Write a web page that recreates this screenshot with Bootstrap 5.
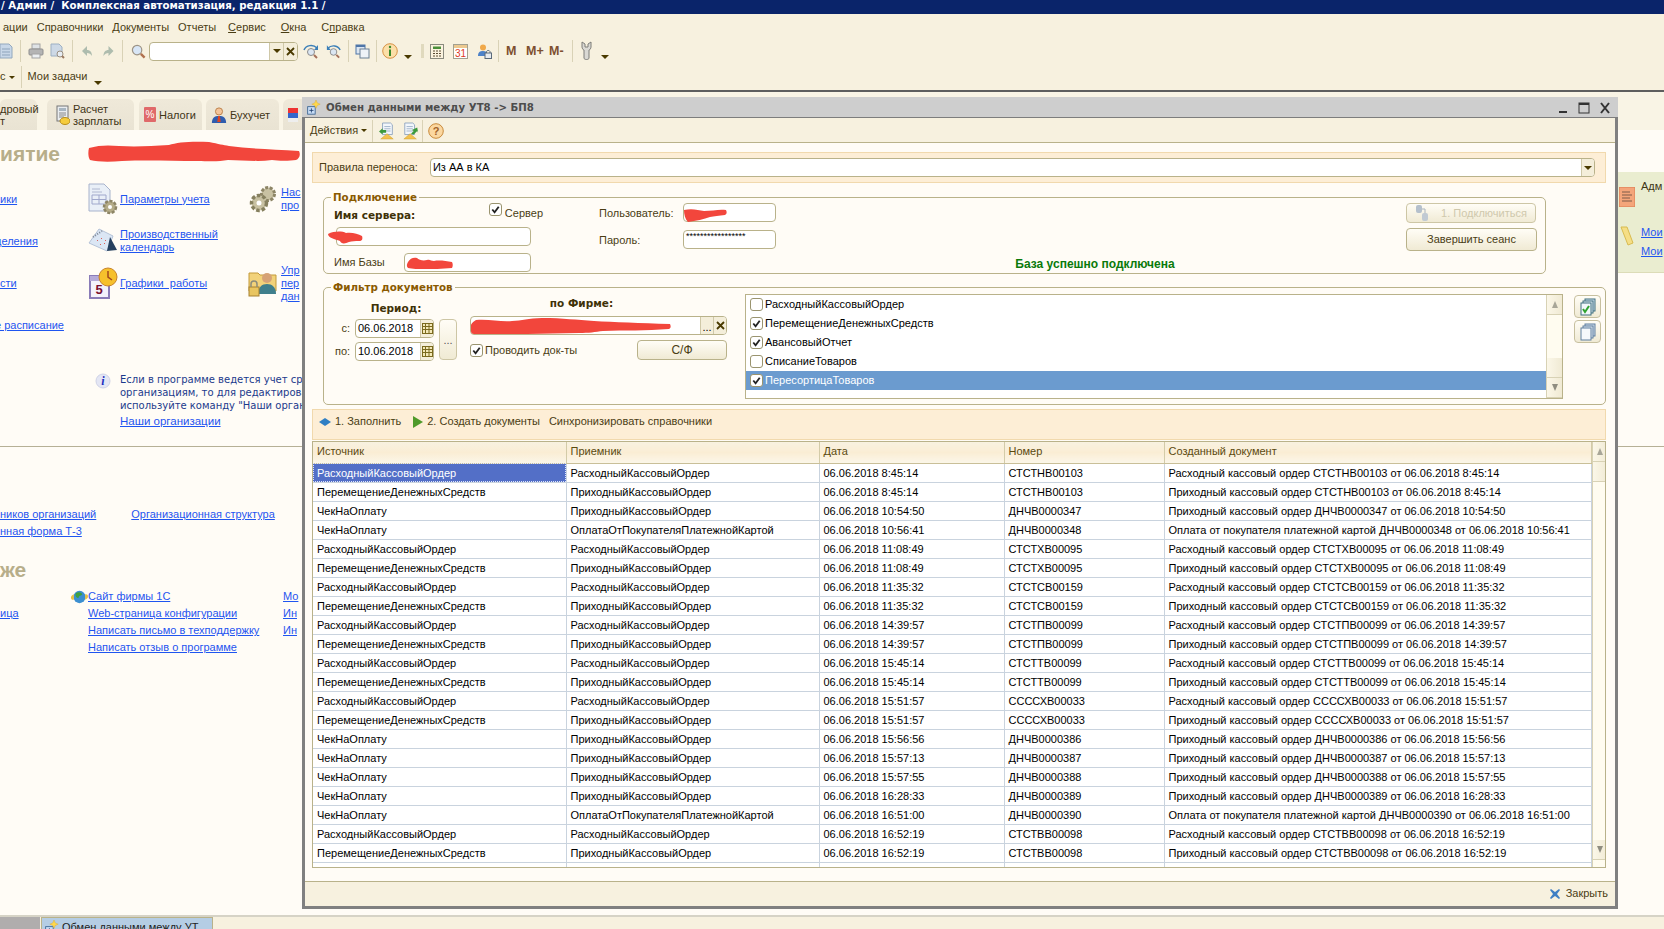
<!DOCTYPE html>
<html lang="ru">
<head>
  <meta charset="UTF-8" />
  <meta name="viewport" content="width=device-width, initial-scale=1.0"/>
  <title>Обмен данными между УТ8 -> БП8</title>
  <link href="https://cdn.jsdelivr.net/npm/bootstrap@5.3.2/dist/css/bootstrap.min.css" rel="stylesheet" />
  <style>
    body { margin: 0; background: #fffcf6; font: 11px/1.2 "Liberation Sans", Arial, sans-serif; color: #000; overflow: hidden; }
    a { color: #1f55f0; }
    svg { display: block; flex: none; }

    .desk { width: 1664px; height: 929px; position: relative; overflow: hidden; }
    .app-title { height: 14px; background: #0a246a; color: #fff; font: bold 10.2px/12px "DejaVu Sans", sans-serif; white-space: pre; padding-left: 1px; overflow: hidden; }
    .app-head { height: 78px; background: #f7f1df; border-bottom: 2px solid #5e5e5e; color: #4a3d14; }
    .menu-row { height: 24px; padding: 7px 0 0 3px; gap: 9px; }
    .tool-row { height: 26px; }
    .tool-row2 { height: 25px; padding-top: 1px; }
    .sep { width: 1px; height: 22px; background: #d9d2b6; flex: none; }
    .m3 { margin-left: 3px; } .m4 { margin-left: 4px; } .m5 { margin-left: 5px; } .m6 { margin-left: 6px; }
    .m7 { margin-left: 7px; } .m8 { margin-left: 8px; } .m9 { margin-left: 9px; } .m12 { margin-left: 12px; }
    .first-ic { margin-left: -2px; }
    .mk { font: bold 12.5px/1 "Liberation Sans", sans-serif; color: #7d4f2f; }
    .mk-1 { width: 11px; } .mk-2 { width: 19px; } .mk-3 { width: 16px; }
    .tri { width: 0; height: 0; border-left: 4px solid transparent; border-right: 4px solid transparent; border-top: 4px solid #4a3a00; flex: none; }
    .tri-sm { border-left-width: 3px; border-right-width: 3px; border-top-width: 3px; }
    .tri-low { margin-top: 11px; }
    .search-box { width: 149px; height: 19px; border: 1px solid #b9b28a; border-radius: 4px; background: #fff; overflow: hidden; }
    .search-btn { width: 14px; background: #f4eeda; border-left: 1px solid #cfc8a8; }

    .tab-strip { height: 38px; padding-top: 7px; background: #f9f4e5; }
    .tab-item { height: 31px; border-radius: 6px 6px 0 0; background: linear-gradient(#efe9d9, #e9e3d3); color: #3f3517; line-height: 12px; gap: 3px; padding: 0 5px; flex: none; }
    .t1 { width: 37px; padding: 0; margin-right: 10px; } .t2 { width: 87px; margin-right: 5px; padding-left: 9px; } .t3 { width: 63px; margin-right: 4px; }
    .t4 { width: 73px; margin-right: 4px; } .t5 { width: 30px; }

    .sp-upper { height: 317px; border-bottom: 1px solid #b6b096; }
    .sp-left { width: 1618px; }
    .sp-head { height: 48px; font: bold 21px/48px "Liberation Sans", sans-serif; color: #b7ae8a; }
    .sp-grid { display: grid; grid-template-columns: 88px 32px 128px 33px 100px; grid-auto-rows: 42px; align-items: center; }
    .sp-grid a, .sp-links a, .sp-info a, .sp-grid2 a { font-size: 11px; line-height: 13px; white-space: nowrap; }
    .clip-l { margin-left: -5px; }
    .sp-info { margin: 27px 0 0 95px; gap: 9px; color: #1b3a8c; line-height: 13px; font-family: "DejaVu Sans", sans-serif; font-size: 10px; white-space: nowrap; }
    .sp-info a { display: block; margin-top: 3px; font-family: "Liberation Sans", sans-serif; font-size: 11.5px; }
    .sp-links { padding-top: 61px; height: 92px; }
    .sp-links a { display: block; margin-bottom: 4px; }
    .sp-links .c2 { margin-left: 35px; }
    .sp-head2 { height: 32px; font: bold 21px/32px "Liberation Sans", sans-serif; color: #b7ae8a; margin-top: 15px; }
    .sp-grid2 { display: grid; grid-template-columns: 71px 17px 195px 40px; grid-auto-rows: 17px; align-items: center; margin-top: 2px; }
    .side-panel { margin-top: 42px; height: 101px; background: #eaedd0; border-bottom: 1px solid #dcdcb8; padding: 8px 0 0 1px; }
    .side-panel a { display: block; margin-top: 6px; line-height: 13px; }
    .side-name { gap: 6px; color: #3f3517; }
    .side-name svg { margin-top: 7px; }
    .side-links { gap: 6px; margin-top: 19px; }

    .task-bar { position: absolute; left: 0; right: 0; top: 915px; height: 14px; border-top: 2px solid #d6d3c6; background: #f7f1df; overflow: hidden; }
    .task-gray { width: 40px; background: #b0adad; }
    .task-tab { width: 172px; margin-left: 1px; background: #b5cde4; border: 1px solid #b9b28a; border-bottom: 0; padding: 2px 0 0 2px; gap: 3px; line-height: 14px; overflow: hidden; white-space: nowrap; color: #222; }

    /* окно обработки поверх начальной страницы */
    .win { position: absolute; left: 302px; top: 97px; width: 1316px; height: 812px; background: #fffcf6; border: solid #808080; border-width: 0 3px 3px 3px; }
    .win-title { height: 21px; flex: none; background: #cecece; border-bottom: 1px solid #7d7d7d; margin: 0 -3px; padding: 1px 7px 0 4px; gap: 5px; font: bold 10.2px/20px "DejaVu Sans", sans-serif; color: #4c4c4c; }
    .win-bar { height: 25px; flex: none; background: #f7f1df; border-bottom: 1px solid #b9b28a; color: #4a3d14; padding: 1px 0 0 5px; }
    .win-body { padding: 9px 9px 0 7px; min-height: 0; }
    .band { height: 31px; flex: none; background: #fdeed6; border: 1px solid #f1d9ad; color: #4a3d14; }
    .band-rule { padding-left: 6px; }
    .fld { height: 19px; border: 1px solid #b9b28a; border-radius: 4px; background: #fff; color: #000; overflow: hidden; padding: 0 2px; flex: none; }
    .rule-fld { margin: 0 10px 0 12px; padding-right: 0; flex: 1 1 auto; }
    .fld-btn { border-left: 1px solid #cfc8a8; background: #f4eeda; width: 13px; height: 100%; }

    .grp { position: relative; flex: none; border: 1px solid #b9b28a; border-radius: 5px; }
    .grp-title { position: absolute; left: 7px; top: -7px; padding: 0 2px; background: #fffcf6; color: #8a5a00; font: bold 10.3px/13px "DejaVu Sans", sans-serif; }
    .grp-conn { margin: 14px 60px 0 11px; height: 77px; padding: 5px 8px 0 10px; color: #4a3d14; }
    .gc1 { width: 197px; } .gc2 { width: 177px; margin-left: 68px; } .gc3 { width: 630px; } .gc4 { width: 131px; }
    .caps { font: bold 10.5px/13px "DejaVu Sans", sans-serif; color: #3f3208; }
    .srv-row { width: 209px; height: 24px; }
    .srv-cap { width: 156px; margin-top: 6px; }
    .srv-row .cb { margin-top: 6px; }
    .srv-txt { margin: 4px 0 0 3px; }
    .srv-fld { margin-left: 2px; }
    .base-row { margin-top: 7px; }
    .w-base { width: 127px; } .w-user { width: 93px; }
    .lab-low { padding-top: 3px; }
    .fld-pass { font-size: 9px; line-height: 11px; }
    .cb.form-check-input { width: 13px; height: 13px; margin: 0; border: 1px solid #9a946f; border-radius: 3px; background-color: #fff; flex: none; float: none; }
    .cb.form-check-input:checked { background-color: #fff; background-size: 11px; background-image: url("data:image/svg+xml,%3csvg xmlns='http://www.w3.org/2000/svg' viewBox='0 0 12 12'%3e%3cpath fill='none' stroke='%23222' stroke-width='2' d='M2.5 6l2.5 3 4.500-6'/%3e%3c/svg%3e"); }
    .red-ink { position: absolute; fill: #f2463c; pointer-events: none; }
    .red-top { left: 88px; top: 141px; }
    .red-a { left: 3px; top: 33px; } .red-b { left: 81px; top: 59px; } .red-c { left: 359px; top: 10px; }
    .red-firm { left: -4px; top: 1px; }
    .xbtn { height: 20px; font-size: 11px; border: 1px solid #cdc6a5; border-radius: 4px; background: linear-gradient(#fffdf6, #f0ead4); color: #4a3d14; padding: 0; width: 130px; }
    .xbtn-dim { color: #cfc8ac; gap: 12px; }
    .xbtn-main { height: 23px; margin-top: 5px; width: 131px; border-color: #b9b28a; }
    .ok-text { color: #0a7a0a; font-weight: bold; text-align: center; padding: 54px 0 0 8px; font-size: 12px; }

    .grp-filter { margin: 13px 0 0 11px; height: 118px; padding: 6px 4px 0 11px; color: #4a3d14; }
    .fc1 { width: 122px; } .fc2 { width: 257px; margin-left: 13px; } .fc3 { width: 818px; margin-left: 18px; } .fc4 { width: 27px; margin-left: 11px; margin-top: 1px; }
    .per-cap { padding-top: 8px; margin-bottom: 4px; text-align: center; }
    .date-lab { width: 20px; text-align: right; padding-right: 5px; }
    .date-fld { width: 79px; padding-right: 0; }
    .date-rows { gap: 4px; }
    .dots-btn { width: 18px; height: 41px; margin-left: 5px; border: 1px solid #cdc6a5; border-radius: 4px; background: linear-gradient(#fffdf6, #f0ead4); color: #555; text-align: center; padding: 14px 0 0; }
    .firm-cap { padding: 3px 34px 0 0; text-align: center; }
    .firm-fld { padding-right: 0; position: relative; margin-top: 6px; }
    .firm-row { margin-top: 5px; }
    .post-txt { margin: 4px 0 0 2px; }
    .sf-btn { width: 90px; height: 20px; border: 1px solid #b9b28a; border-radius: 4px; background: linear-gradient(#fffdf6, #f0ead4); color: #4a3d14; font-size: 12px; line-height: 1; padding: 0; }
    .doc-list { height: 105px; border: 1px solid #b9b28a; background: #fff; padding: 0; }
    .doc-item { height: 19px; padding: 0 0 0 4px; gap: 2px; border: 0; color: #000; background: transparent; border-radius: 0; font-size: 11px; }
    .doc-item.sel { background: #6b9bcf; color: #fff; }
    .vbar { width: 16px; background: #fffcf0; border-left: 1px solid #d8d2b5; flex: none; }
    .vbar-btn { height: 20px; background: linear-gradient(90deg, #fbf7e8, #f0ead4); border-bottom: 1px solid #d8d2b5; color: #a6a28c; }
    .up-tri { width: 0; height: 0; border-left: 3px solid transparent; border-right: 3px solid transparent; border-bottom: 7px solid #a8a698; }
    .dn-tri { width: 0; height: 0; border-left: 3px solid transparent; border-right: 3px solid transparent; border-top: 7px solid #8f8d80; }
    .side-btn { width: 27px; height: 23px; border: 1px solid #c7c09f; border-radius: 4px; background: linear-gradient(#fffdf6, #f0ead4); margin-bottom: 2px; }

    .band-act { margin-top: 4px; padding: 0 0 5px 6px; flex: none; }
    .data-wrap { margin-top: 1px; height: 427px; border: 1px solid #b9b28a; background: #fff; overflow: hidden; flex: none; }
    .data-grid { table-layout: fixed; width: 1278px; margin: 0; border-collapse: collapse; font-size: 11px; }
    .cw1, .cw2 { width: 253px; } .cw3 { width: 185px; } .cw4 { width: 160px; } .cw5 { width: 427px; }
    .data-grid th, .data-grid td { padding: 0 4px; border: 0; border-right: 1px solid #c9d3de; border-bottom: 1px solid #c9d3de; white-space: nowrap; overflow: hidden; font-weight: normal; height: 19px; line-height: 18px; box-shadow: none; color: #000; background: #fff; }
    .data-grid th { height: 21px; line-height: 18px; vertical-align: top; background: linear-gradient(#f8f2e0, #faedd4 50%, #fbf6e8); color: #5a4a10; border-right-color: #d3cba8; border-bottom-color: #c9bf98; }
    .data-grid td.cur { background: #536fc7; color: #fff; outline: 1px dotted #dfe6ff; outline-offset: -1px; }
    .spacer-end { height: 7px; }
    .win-foot { height: 25px; flex: none; background: #f7f1df; border-top: 1px solid #b9b28a; margin: 13px -9px 0 -7px; color: #4a3d14; padding-right: 7px; gap: 5px; }
  </style>
</head>
<body>
  <svg width="0" height="0" class="position-absolute">
    <defs>
      <symbol id="i-doc" viewBox="0 0 16 18"><path d="M2 2h9l3 3v11H2z" fill="#c8d7e8" stroke="#93a8be"/><path d="M4 7h8M4 10h8M4 13h8" stroke="#8da3bb"/></symbol>
      <symbol id="i-print" viewBox="0 0 16 16"><rect x="4" y="1" width="8" height="5" fill="#dfe3e6" stroke="#a3a3a3"/><rect x="1" y="6" width="14" height="6" rx="1" fill="#b4b4b4" stroke="#8f8f8f"/><rect x="4" y="11" width="8" height="4" fill="#eceff1" stroke="#a3a3a3"/></symbol>
      <symbol id="i-prev" viewBox="0 0 15 16"><path d="M1 1h8l3 3v9H1z" fill="#cdd9e6" stroke="#9db0c3"/><circle cx="10" cy="11" r="3" fill="#e7edf3" stroke="#9a8f80"/><path d="M12 13l2 2" stroke="#9a7a60" stroke-width="2"/></symbol>
      <symbol id="i-undo" viewBox="0 0 11 12"><path d="M5 1L0 6l5 5V8c2 0 4 1 5 3 0-4-2-6-5-6z" fill="#aebcae"/></symbol>
      <symbol id="i-redo" viewBox="0 0 11 12"><path d="M6 1l5 5-5 5V8c-2 0-4 1-5 3 0-4 2-6 5-6z" fill="#aebcae"/></symbol>
      <symbol id="i-lens" viewBox="0 0 16 16"><circle cx="6.500" cy="6.500" r="5" fill="#d8e6f6" stroke="#9d9486" stroke-width="1.300"/><path d="M10.500 10.500l4 4" stroke="#b0714f" stroke-width="2.500"/></symbol>
      <symbol id="i-findn" viewBox="0 0 18 17"><path d="M2 7c2-5 9-6 13-2" fill="none" stroke="#3b7fb8" stroke-width="1.500"/><path d="M16 2v5h-4z" fill="#3b7fb8"/><circle cx="9" cy="9" r="3.500" fill="#dbe6f2" stroke="#8b8b8b"/><path d="M12 12l3 3" stroke="#a5705a" stroke-width="2"/></symbol>
      <symbol id="i-findp" viewBox="0 0 18 17"><path d="M16 7C14 2 7 1 3 5" fill="none" stroke="#3b7fb8" stroke-width="1.500"/><path d="M2 2v5h4z" fill="#3b7fb8"/><circle cx="9" cy="9" r="3.500" fill="#dbe6f2" stroke="#8b8b8b"/><path d="M12 12l3 3" stroke="#a5705a" stroke-width="2"/></symbol>
      <symbol id="i-copy" viewBox="0 0 15 15"><rect x="1" y="1" width="9" height="9" fill="#dce6f1" stroke="#4f76a8"/><rect x="1" y="1" width="9" height="2" fill="#4f76a8"/><rect x="5" y="5" width="9" height="9" fill="#eef3f8" stroke="#6b8095"/></symbol>
      <symbol id="i-info" viewBox="0 0 16 16"><circle cx="8" cy="8" r="7.300" fill="#fbdfa8" stroke="#d69245"/><circle cx="8" cy="4" r="1.200" fill="#3a8a2a"/><rect x="7" y="6.500" width="2" height="6.500" fill="#3a8a2a"/></symbol>
      <symbol id="i-calc" viewBox="0 0 14 15"><rect x=".5" y=".5" width="13" height="14" fill="#fbf3df" stroke="#8a8a7e"/><rect x="3" y="2.500" width="8" height="2.500" fill="#4a8f3a"/><path d="M3 7h2M6 7h2M9 7h2M3 9.500h2M6 9.500h2M9 9.500h2M3 12h2M6 12h2M9 12h2" stroke="#5a4a32"/></symbol>
      <symbol id="i-cal" viewBox="0 0 15 15"><rect x=".5" y=".5" width="14" height="14" fill="#fff" stroke="#a2a090"/><rect x="1" y="1" width="13" height="3" fill="#ecc98f"/><text x="7.500" y="13" text-anchor="middle" font-family="Liberation Sans" font-size="10" fill="#e0391c">31</text></symbol>
      <symbol id="i-user" viewBox="0 0 15 15"><circle cx="6" cy="3.500" r="3" fill="#f0a94a"/><path d="M1 12c0-4 2-5 5-5s4 1 4 2v3z" fill="#4d82c8"/><rect x="8" y="9" width="6.500" height="5.500" fill="#e6eaee" stroke="#5a6a7a"/><path d="M9.500 9V7.500a2 2 0 0 1 3.500 0V9" fill="none" stroke="#5a6a7a"/></symbol>
      <symbol id="i-wrench" viewBox="0 0 15 20"><path d="M3 1v5c0 1 1 3 2 3v8c0 2 5 2 5 0V9c1 0 2-2 2-3V1L9 3v3H6V3z" fill="#dad9d4" stroke="#7d7d78"/></symbol>
      <symbol id="i-win" viewBox="0 0 18 18"><rect x="2" y="8" width="9" height="9" fill="#c7dcf5" stroke="#35608f"/><path d="M6.500 10v5M4 12.500h5" stroke="#1e3f6f"/><path d="M12 0l1.500 3.500L17 5l-3.500 1.500L12 10l-1.500-3.500L7 5l3.500-1.500z" fill="#ffd84a" stroke="#dba72c" stroke-width=".5"/></symbol>
      <symbol id="i-load" viewBox="0 0 18 18"><path d="M4 0h9l2 2v11H4z" fill="#f2f6fb" stroke="#8ca2be"/><path d="M6 4h7M6 6.500h7M6 9h7" stroke="#9cb0c8"/><path d="M0 9.500l4-3.500v2h4v3H4v2z" fill="#3c9a3c"/><path d="M2 18l7-6 7 6z" fill="#f2c14e" stroke="#c89a2a" stroke-width=".5"/></symbol>
      <symbol id="i-save" viewBox="0 0 18 18"><path d="M2 0h9l2 2v11H2z" fill="#f2f6fb" stroke="#8ca2be"/><path d="M4 4h7M4 6.500h7M4 9h7" stroke="#9cb0c8"/><path d="M16 5L10 8l2 1-3 3 3 1 4-4 1 2z" fill="#3c9a3c"/><path d="M1 18l7-6 7 6z" fill="#f2c14e" stroke="#c89a2a" stroke-width=".5"/></symbol>
      <symbol id="i-help" viewBox="0 0 16 16"><circle cx="8" cy="8" r="7.300" fill="#fbd7a0" stroke="#c88a3c"/><text x="8" y="12" text-anchor="middle" font-family="Liberation Sans" font-weight="bold" font-size="11" fill="#a0622a">?</text></symbol>
      <symbol id="i-grid" viewBox="0 0 11 11"><rect x=".5" y=".5" width="10" height="10" fill="#f4e9b8" stroke="#7b6a1e"/><path d="M.5 3.500h10M.5 6.500h10M3.500.5v10M7 .5v10" stroke="#7b6a1e"/></symbol>
      <symbol id="i-checks" viewBox="0 0 16 18"><rect x="5" y="1" width="10" height="12" fill="#cfe0ee" stroke="#3f6f7f"/><rect x="3" y="3" width="10" height="12" fill="#dfeaf3" stroke="#3f6f7f"/><rect x="1" y="5" width="10" height="12" fill="#f2f7fb" stroke="#3f6f7f"/><path d="M3 11l2 3 4-6" fill="none" stroke="#2fa32f" stroke-width="2"/></symbol>
      <symbol id="i-pages" viewBox="0 0 16 18"><rect x="5" y="1" width="10" height="12" fill="#cfdcea" stroke="#5f7f9f"/><rect x="3" y="3" width="10" height="12" fill="#dfe8f1" stroke="#5f7f9f"/><rect x="1" y="5" width="10" height="12" fill="#f5f8fb" stroke="#5f7f9f"/></symbol>
      <symbol id="i-plug" viewBox="0 0 14 18"><rect x="1" y="1" width="6" height="8" rx="2" fill="#b5c0cc"/><path d="M7 5h3v4" fill="none" stroke="#aab4be"/><rect x="7" y="9" width="6" height="8" rx="2" fill="#c1cad3"/></symbol>
      <symbol id="i-close" viewBox="0 0 12 12"><path d="M1 2l1-1 4 3 4-3 1 1-3 4 3 4-1 1-4-3-4 3-1-1 3-4z" fill="#3f7fc4"/></symbol>
      <symbol id="i-x" viewBox="0 0 9 9"><path d="M1 1l7 7M8 1L1 8" stroke="#4a3a00" stroke-width="1.800"/></symbol>
      <symbol id="i-params" viewBox="0 0 30 32"><path d="M1 1h15l6 6v21H1z" fill="#e9eff7" stroke="#a8b3cc"/><path d="M4 12h14v9H4zM4 16.500h14M11 12v9" fill="none" stroke="#a0a8cc"/><path d="M4 6h8M4 9h10" stroke="#b0b8d0"/><circle cx="22" cy="24" r="6" fill="#b5ac88" stroke="#8d8566" stroke-width="2.500" stroke-dasharray="3 1.500"/><circle cx="22" cy="24" r="2" fill="#fff"/></symbol>
      <symbol id="i-desk" viewBox="0 0 30 26"><path d="M1 15L11 1l14 7-6 15z" fill="#dbe6f4" stroke="#b5c3d8"/><path d="M5 9l9-6" stroke="#7d8796" stroke-width="2" stroke-dasharray="1 1.500"/><path d="M22 9l7 13-10 1z" fill="#26405f"/><path d="M9 12l1 1M13 10l1 1M17 12l1 1M12 16l1 1M16 15l1 1" stroke="#d9605a"/></symbol>
      <symbol id="i-sched" viewBox="0 0 30 32"><rect x="2" y="9" width="19" height="22" fill="#f4f2fb" stroke="#8a7cb8" stroke-width="2"/><rect x="2" y="9" width="19" height="5" fill="#b5aad8"/><text x="11" y="27" text-anchor="middle" font-family="Liberation Sans" font-weight="bold" font-size="13" fill="#7a1030">5</text><circle cx="20" cy="10" r="9" fill="#f6c02c" stroke="#c8832a"/><path d="M20 4v6l4 3" fill="none" stroke="#a3471a" stroke-width="1.500"/></symbol>
      <symbol id="i-gears" viewBox="0 0 30 32"><circle cx="20" cy="11" r="6.500" fill="#c8c1a2" stroke="#8d8566" stroke-width="3" stroke-dasharray="3 1.500"/><circle cx="11" cy="20" r="7.500" fill="#c8c1a2" stroke="#86805f" stroke-width="3.500" stroke-dasharray="3.500 2"/><circle cx="11" cy="20" r="2.500" fill="#fff"/></symbol>
      <symbol id="i-mgr" viewBox="0 0 30 32"><path d="M1 6h9l2 2h16v16H1z" fill="#f2d27a" stroke="#c39a3a"/><circle cx="19" cy="11" r="5" fill="#d6a276"/><path d="M10 27c0-7 4-10 9-10s9 3 9 10z" fill="#3f7f8c"/><rect x="1" y="20" width="10" height="9" fill="#e9c560" stroke="#a78130"/><path d="M3 20v-3a3 3 0 0 1 6 0v3" fill="none" stroke="#8c8c7a" stroke-width="1.500"/></symbol>
      <symbol id="i-note" viewBox="0 0 16 16"><circle cx="8" cy="8" r="7" fill="#e4e6f4" stroke="#d0d3e6"/><text x="8" y="12" text-anchor="middle" font-family="Liberation Serif" font-style="italic" font-weight="bold" font-size="12" fill="#1c2fc0">i</text></symbol>
      <symbol id="i-globe" viewBox="0 0 18 14"><ellipse cx="9" cy="7" rx="6.500" ry="6.500" fill="#3c8fd0"/><path d="M5 3c3-2 6-1 7 1-1 2-4 1-4 4-2 0-4-2-3-5z" fill="#3fa03f"/><path d="M0 8c0-3 2-3 3-4v6C2 10 0 10 0 8zM18 6c0 3-2 3-3 4V4c1 0 3 0 3 2z" fill="#e8c040"/></symbol>
      <symbol id="i-pay" viewBox="0 0 14 20"><rect x="1" y="1" width="11" height="15" fill="#e9ecef" stroke="#777"/><rect x="3" y="3" width="7" height="3" fill="#a7b5c1"/><path d="M3 8h7M3 10h7M3 12h5" stroke="#888"/><ellipse cx="9" cy="16" rx="5" ry="3.500" fill="#f5cc3e" stroke="#b88e1a"/></symbol>
      <symbol id="i-tax" viewBox="0 0 12 15"><rect width="12" height="15" rx="1" fill="#e0696a"/><text x="6" y="11" text-anchor="middle" font-family="Liberation Sans" font-size="10" fill="#fff">%</text></symbol>
      <symbol id="i-acc" viewBox="0 0 18 18"><circle cx="9" cy="5" r="4" fill="#f3c49a" stroke="#b7793f"/><path d="M1 18c0-6 3-8 8-8s8 2 8 8z" fill="#2f5cae"/><path d="M8 10h2l1 7H7z" fill="#d42"/></symbol>
      <symbol id="i-flag" viewBox="0 0 10 16"><rect width="10" height="5" y="1" fill="#e33"/><rect width="10" height="5" y="6" fill="#36c"/><rect width="10" height="4" y="11" fill="#eee"/></symbol>
      <symbol id="i-admin" viewBox="0 0 16 20"><rect width="16" height="20" rx="1" fill="#f4a57a" stroke="#d97a50"/><path d="M3 5h8M3 8h10M3 11h8M3 14h10" stroke="#7d5a48"/></symbol>
      <symbol id="i-memo" viewBox="0 0 14 20"><path d="M1 1h6l6 16-5 2z" fill="#f5de85" stroke="#d8bb50"/></symbol>
    </defs>
  </svg>

  <div class="desk">
    <div class="app-title">/ Админ /  Комплексная автоматизация, редакция 1.1 /</div>

    <div class="app-head">
      <div class="menu-row d-flex">
        <span>ации</span><span>Справочники</span><span>Документы</span><span>Отчеты</span>
        <span class="m3"><u>С</u>ервис</span><span class="m6"><u>О</u>кна</span><span class="m6">С<u>п</u>равка</span>
      </div>
      <div class="tool-row d-flex align-items-center">
        <svg width="16" height="18" class="first-ic"><use href="#i-doc"/></svg>
        <i class="sep m6"></i>
        <svg width="16" height="16" class="m7"><use href="#i-print"/></svg>
        <svg width="15" height="16" class="m6"><use href="#i-prev"/></svg>
        <i class="sep m7"></i>
        <svg width="11" height="12" class="m9"><use href="#i-undo"/></svg>
        <svg width="12" height="12" class="m9"><use href="#i-redo"/></svg>
        <i class="sep m8"></i>
        <svg width="15" height="15" class="m8"><use href="#i-lens"/></svg>
        <div class="search-box d-flex justify-content-end m3">
          <div class="search-btn d-flex align-items-center justify-content-center"><i class="tri"></i></div>
          <div class="search-btn d-flex align-items-center justify-content-center"><svg width="9" height="9"><use href="#i-x"/></svg></div>
        </div>
        <svg width="18" height="17" class="m4"><use href="#i-findn"/></svg>
        <svg width="17" height="17" class="m5"><use href="#i-findp"/></svg>
        <i class="sep m6"></i>
        <svg width="15" height="15" class="m6"><use href="#i-copy"/></svg>
        <i class="sep m6"></i>
        <svg width="16" height="16" class="m5"><use href="#i-info"/></svg>
        <i class="tri tri-low m6"></i>
        <svg width="3" height="14" class="m9"><path d="M0 1h3M0 3h3M0 5h3M0 7h3M0 9h3M0 11h3M0 13h3" stroke="#c9c29c"/></svg>
        <svg width="14" height="15" class="m6"><use href="#i-calc"/></svg>
        <svg width="15" height="15" class="m9"><use href="#i-cal"/></svg>
        <svg width="15" height="15" class="m9"><use href="#i-user"/></svg>
        <i class="sep m6"></i>
        <span class="mk mk-1 m7">M</span><span class="mk mk-2 m9">M+</span><span class="mk mk-3 m4">M-</span>
        <i class="sep m7"></i>
        <svg width="15" height="20" class="m6"><use href="#i-wrench"/></svg>
        <i class="tri tri-low m7"></i>
      </div>
      <div class="tool-row2 d-flex align-items-center">
        <span>с</span><i class="tri tri-sm m3"></i><i class="sep m6"></i><span class="m6">Мои задачи</span><i class="tri tri-low m7"></i>
      </div>
    </div>

    <div class="tab-strip d-flex">
      <div class="tab-item t1 d-flex align-items-center">дровый<br>т</div>
      <div class="tab-item t2 d-flex align-items-center"><svg width="14" height="20"><use href="#i-pay"/></svg><span>Расчет<br>зарплаты</span></div>
      <div class="tab-item t3 d-flex align-items-center"><svg width="12" height="15"><use href="#i-tax"/></svg><span>Налоги</span></div>
      <div class="tab-item t4 d-flex align-items-center"><svg width="16" height="18"><use href="#i-acc"/></svg><span>Бухучет</span></div>
      <div class="tab-item t5 d-flex align-items-center"><svg width="10" height="16"><use href="#i-flag"/></svg></div>
    </div>

    <!-- начальная страница под окном -->
    <div class="sp-upper d-flex">
      <div class="sp-left">
        <div class="sp-head d-flex">
          <span>иятие</span>
          <svg width="212" height="22" class="red-ink red-top"><path d="M1 7c10-3 20-3 30-2 18 1 32 0 50-1 8-3 24-4 40-3 10 2 14 3 20 4 22 3 44 3 70 5 2 4 0 8-3 9-6 1-18 1-24 0-14 2-30 0-44 0-10 2-22 1-30 1-26 0-50-1-76 0-12 1-24 1-32-1C0 16 0 11 1 7z"/></svg>
        </div>
        <div class="sp-grid">
          <a href="#">ики</a><svg width="30" height="32"><use href="#i-params"/></svg><a href="#">Параметры учета</a><svg width="30" height="32"><use href="#i-gears"/></svg><a href="#">Нас<br>про</a>
          <a href="#" class="clip-l">деления</a><svg width="30" height="26"><use href="#i-desk"/></svg><a href="#">Производственный<br>календарь</a><span></span><span></span>
          <a href="#">сти</a><svg width="30" height="32"><use href="#i-sched"/></svg><a href="#">Графики&nbsp; работы</a><svg width="30" height="32"><use href="#i-mgr"/></svg><a href="#">Упр<br>пер<br>дан</a>
          <a href="#" class="clip-l">е расписание</a>
        </div>
        <div class="sp-info d-flex">
          <svg width="16" height="16"><use href="#i-note"/></svg>
          <div>Если в программе ведется учет сра<br>организациям, то для редактирова<br>используйте команду "Наши органи<a href="#">Наши организации</a></div>
        </div>
      </div>
      <div class="flex-fill">
        <div class="side-panel">
          <div class="side-name d-flex"><svg width="16" height="20"><use href="#i-admin"/></svg><span>Адм</span></div>
          <div class="side-links d-flex"><svg width="16" height="20"><use href="#i-memo"/></svg><div><a href="#" class="mt-0">Мои</a><a href="#">Мои</a></div></div>
        </div>
      </div>
    </div>
    <div class="sp-links d-flex">
      <div><a href="#">ников организаций</a><a href="#">нная форма Т-3</a></div>
      <div class="c2"><a href="#">Организационная структура</a></div>
    </div>
    <div class="sp-head2">же</div>
    <div class="sp-grid2">
      <span></span><svg width="17" height="14"><use href="#i-globe"/></svg><a href="#">Сайт фирмы 1С</a><a href="#">Мо</a>
      <a href="#">ица</a><span></span><a href="#">Web-страница конфигурации</a><a href="#">Ин</a>
      <span></span><span></span><a href="#">Написать письмо в техподдержку</a><a href="#">Ин</a>
      <span></span><span></span><a href="#">Написать отзыв о программе</a><span></span>
    </div>

    <div class="task-bar d-flex">
      <div class="task-gray"></div>
      <div class="task-tab d-flex"><svg width="15" height="15"><use href="#i-win"/></svg><span>Обмен данными между УТ</span></div>
    </div>

    <!-- окно обработки -->
    <div class="win d-flex flex-column">
      <div class="win-title d-flex align-items-center">
        <svg width="15" height="15"><use href="#i-win"/></svg>
        <span class="flex-fill">Обмен данными между УТ8 -&gt; БП8</span>
        <svg width="10" height="10"><rect y="8" width="8" height="2" fill="#333"/></svg>
        <svg width="12" height="12" class="ms-1"><rect x="1" y="1" width="10" height="10" fill="none" stroke="#333"/><rect x="1" y="1" width="10" height="2" fill="#333"/></svg>
        <svg width="12" height="12" class="ms-1"><path d="M2 1l8 10M10 1L2 11" stroke="#333" stroke-width="2"/></svg>
      </div>
      <div class="win-bar d-flex align-items-center">
        <span>Действия</span><i class="tri tri-sm m3"></i><i class="sep m5"></i>
        <svg width="16" height="18" class="m6"><use href="#i-load"/></svg>
        <svg width="16" height="18" class="m8"><use href="#i-save"/></svg>
        <i class="sep m3"></i>
        <svg width="16" height="16" class="m5"><use href="#i-help"/></svg>
      </div>

      <div class="win-body d-flex flex-column flex-fill">
        <div class="band band-rule d-flex align-items-center">
          <span>Правила переноса:</span>
          <div class="fld rule-fld d-flex align-items-center justify-content-between">
            <span>Из АА в КА</span>
            <div class="fld-btn d-flex align-items-center justify-content-center"><i class="tri"></i></div>
          </div>
        </div>

        <div class="grp grp-conn d-flex">
          <span class="grp-title">Подключение</span>
          <div class="gc1">
            <div class="srv-row d-flex align-items-start">
              <span class="caps srv-cap">Имя сервера:</span>
              <input class="cb form-check-input" type="checkbox" checked aria-label="Сервер">
              <span class="srv-txt">Сервер</span>
            </div>
            <div class="fld srv-fld"></div>
            <div class="base-row d-flex align-items-center justify-content-between">
              <span>Имя Базы</span>
              <div class="fld w-base"></div>
            </div>
          </div>
          <div class="gc2">
            <div class="d-flex align-items-center justify-content-between">
              <span class="lab-low">Пользователь:</span><div class="fld w-user"></div>
            </div>
            <div class="d-flex align-items-center justify-content-between mt-2">
              <span class="lab-low">Пароль:</span><div class="fld w-user fld-pass">*****************</div>
            </div>
          </div>
          <div class="gc3 ok-text">База успешно подключена</div>
          <div class="gc4">
            <button type="button" class="btn xbtn xbtn-dim d-flex align-items-center justify-content-center"><svg width="14" height="18"><use href="#i-plug"/></svg><span>1. Подключиться</span></button>
            <button type="button" class="btn xbtn xbtn-main d-block">Завершить сеанс</button>
          </div>
          <svg width="36" height="13" class="red-ink red-a"><path d="M1 3c6-3 14-3 18-1 6-1 12 1 16 3 1 3 0 5-3 5-4 0-7 0-10 1-4 2-8 2-9-1C8 8 1 7 1 3z"/></svg>
          <svg width="48" height="12" class="red-ink red-b"><path d="M3 5c2-4 6-5 9-4 2 2 6 3 10 2 3-1 4 1 7 1 5-1 12 0 18 1 1 2 1 4 0 6-10 1-20 1-28 1-5 0-12 0-16-1-2-2-1-4 0-6z"/></svg>
          <svg width="44" height="15" class="red-ink red-c"><path d="M1 2c8-2 14 0 20 1 8 0 15-2 22-1 1 2 1 4-1 5-6 1-11 1-15 2-6 2-14 4-22 5C2 11 1 6 1 2z"/></svg>
        </div>

        <div class="grp grp-filter d-flex">
          <span class="grp-title">Фильтр документов</span>
          <div class="fc1">
            <div class="caps per-cap">Период:</div>
            <div class="d-flex">
              <div class="date-rows d-flex flex-column">
                <div class="d-flex align-items-center"><span class="date-lab">с:</span><div class="fld date-fld d-flex align-items-center justify-content-between"><span>06.06.2018</span><div class="fld-btn d-flex align-items-center justify-content-center"><svg width="11" height="11"><use href="#i-grid"/></svg></div></div></div>
                <div class="d-flex align-items-center"><span class="date-lab">по:</span><div class="fld date-fld d-flex align-items-center justify-content-between"><span>10.06.2018</span><div class="fld-btn d-flex align-items-center justify-content-center"><svg width="11" height="11"><use href="#i-grid"/></svg></div></div></div>
              </div>
              <div class="dots-btn">...</div>
            </div>
          </div>
          <div class="fc2">
            <div class="caps firm-cap">по Фирме:</div>
            <div class="fld firm-fld d-flex justify-content-end">
              <svg width="206" height="16" class="red-ink red-firm"><path d="M1 13c2-5 4-9 8-11 14-1 24 2 36 1 10 0 16-3 30-3 22 0 34 2 52 3 20 1 46 2 76 3 1 2 1 4-1 5-24 2-44 1-66 2-8 1-14 2-24 2-18 0-34 1-52 1-14 1-30 1-56 0z"/></svg>
              <div class="fld-btn d-flex align-items-end justify-content-center">...</div>
              <div class="fld-btn d-flex align-items-center justify-content-center"><svg width="9" height="9"><use href="#i-x"/></svg></div>
            </div>
            <div class="firm-row d-flex align-items-start justify-content-between">
              <div class="d-flex align-items-start"><input class="cb form-check-input mt-1" type="checkbox" checked aria-label="Проводить док-ты"><span class="post-txt">Проводить док-ты</span></div>
              <button type="button" class="btn sf-btn">С/Ф</button>
            </div>
          </div>
          <div class="fc3 doc-list d-flex">
            <div class="list-group flex-fill rounded-0">
              <div class="list-group-item doc-item d-flex align-items-center"><input class="cb form-check-input" type="checkbox" aria-label="РасходныйКассовыйОрдер"><span>РасходныйКассовыйОрдер</span></div>
              <div class="list-group-item doc-item d-flex align-items-center"><input class="cb form-check-input" type="checkbox" checked aria-label="ПеремещениеДенежныхСредств"><span>ПеремещениеДенежныхСредств</span></div>
              <div class="list-group-item doc-item d-flex align-items-center"><input class="cb form-check-input" type="checkbox" checked aria-label="АвансовыйОтчет"><span>АвансовыйОтчет</span></div>
              <div class="list-group-item doc-item d-flex align-items-center"><input class="cb form-check-input" type="checkbox" aria-label="СписаниеТоваров"><span>СписаниеТоваров</span></div>
              <div class="list-group-item doc-item sel d-flex align-items-center"><input class="cb form-check-input" type="checkbox" checked aria-label="ПересортицаТоваров"><span>ПересортицаТоваров</span></div>
            </div>
            <div class="vbar d-flex flex-column">
              <div class="vbar-btn d-flex align-items-center justify-content-center"><i class="up-tri"></i></div>
              <div class="flex-fill"></div>
              <div class="vbar-btn"></div>
              <div class="vbar-btn d-flex align-items-center justify-content-center"><i class="dn-tri"></i></div>
            </div>
          </div>
          <div class="fc4">
            <div class="side-btn d-flex align-items-center justify-content-center"><svg width="16" height="18"><use href="#i-checks"/></svg></div>
            <div class="side-btn d-flex align-items-center justify-content-center"><svg width="16" height="18"><use href="#i-pages"/></svg></div>
          </div>
        </div>

        <div class="band band-act d-flex align-items-center">
          <svg width="12" height="8"><path d="M0 4l6-4 6 4-6 4z" fill="#2f7fc4"/></svg>
          <span class="m4">1. Заполнить</span>
          <svg width="10" height="12" class="m12"><path d="M0 0l10 6-10 6z" fill="#4f9a2a"/></svg>
          <span class="m4">2. Создать документы</span>
          <span class="m9">Синхронизировать справочники</span>
        </div>

        <div class="data-wrap d-flex">
          <table class="table data-grid">
            <colgroup><col class="cw1"><col class="cw2"><col class="cw3"><col class="cw4"><col class="cw5"></colgroup>
            <thead><tr><th>Источник</th><th>Приемник</th><th>Дата</th><th>Номер</th><th>Созданный документ</th></tr></thead>
            <tbody id="rows"></tbody>
          </table>
          <div class="vbar d-flex flex-column">
            <div class="vbar-btn d-flex align-items-center justify-content-center"><i class="up-tri"></i></div>
            <div class="vbar-btn"></div>
            <div class="flex-fill"></div>
            <div class="vbar-btn d-flex align-items-center justify-content-center"><i class="dn-tri"></i></div>
            <div class="spacer-end"></div>
          </div>
        </div>

        <div class="win-foot d-flex align-items-center justify-content-end">
          <svg width="12" height="12"><use href="#i-close"/></svg><span>Закрыть</span>
        </div>
      </div>
    </div>
  </div>

  <script>
    const R = ["РасходныйКассовыйОрдер", "РасходныйКассовыйОрдер", "Расходный кассовый ордер"];
    const P = ["ПеремещениеДенежныхСредств", "ПриходныйКассовыйОрдер", "Приходный кассовый ордер"];
    const C = ["ЧекНаОплату", "ПриходныйКассовыйОрдер", "Приходный кассовый ордер"];
    const K = ["ЧекНаОплату", "ОплатаОтПокупателяПлатежнойКартой", "Оплата от покупателя платежной картой"];

    const data = [
      [R, "8:45:14", "СТСТНВ00103"], [P, "8:45:14", "СТСТНВ00103"],
      [C, "10:54:50", "ДНЧВ0000347"], [K, "10:56:41", "ДНЧВ0000348"],
      [R, "11:08:49", "СТСТХВ00095"], [P, "11:08:49", "СТСТХВ00095"],
      [R, "11:35:32", "СТСТСВ00159"], [P, "11:35:32", "СТСТСВ00159"],
      [R, "14:39:57", "СТСТПВ00099"], [P, "14:39:57", "СТСТПВ00099"],
      [R, "15:45:14", "СТСТТВ00099"], [P, "15:45:14", "СТСТТВ00099"],
      [R, "15:51:57", "ССССХВ00033"], [P, "15:51:57", "ССССХВ00033"],
      [C, "15:56:56", "ДНЧВ0000386"], [C, "15:57:13", "ДНЧВ0000387"],
      [C, "15:57:55", "ДНЧВ0000388"], [C, "16:28:33", "ДНЧВ0000389"],
      [K, "16:51:00", "ДНЧВ0000390"],
      [R, "16:52:19", "СТСТВВ00098"], [P, "16:52:19", "СТСТВВ00098"]
    ];

    document.getElementById("rows").innerHTML = data.map(([t, time, num], i) => {
      const dt = "06.06.2018 " + time;
      return `<tr><td${i === 0 ? ' class="cur"' : ""}>${t[0]}</td><td>${t[1]}</td><td>${dt}</td><td>${num}</td><td>${t[2]} ${num} от ${dt}</td></tr>`;
    }).join("") + "<tr><td></td><td></td><td></td><td></td><td></td></tr>";
  </script>
</body>
</html>
